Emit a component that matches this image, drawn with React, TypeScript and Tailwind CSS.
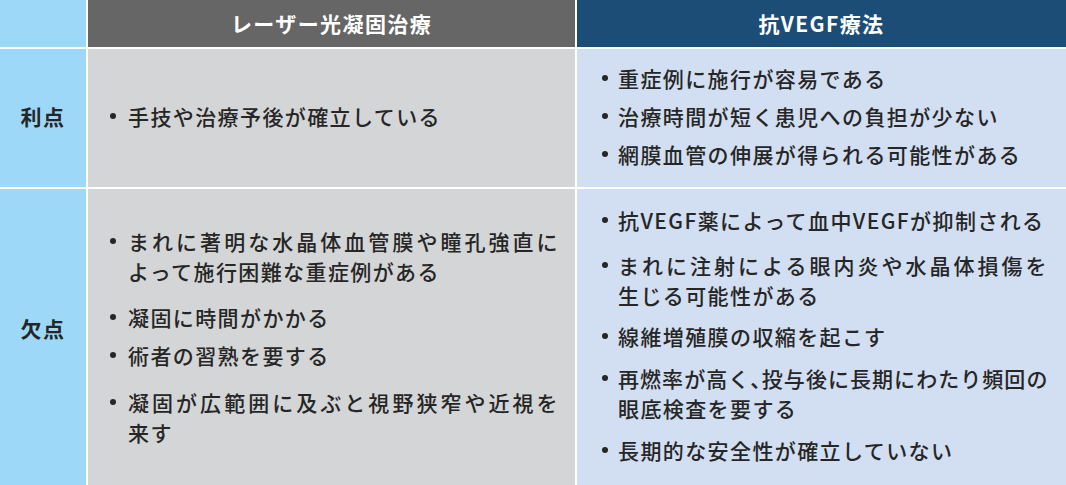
type Item = (string | string[])[];

const laserPros: Item[] = [["手技や治療予後が確立している"]];
const vegfPros: Item[] = [
  ["重症例に施行が容易である"],
  ["治療時間が短く患児への負担が少ない"],
  ["網膜血管の伸展が得られる可能性がある"],
];
const laserCons: Item[] = [
  ["まれに著明な水晶体血管膜や瞳孔強直に", "よって施行困難な重症例がある"],
  ["凝固に時間がかかる"],
  ["術者の習熟を要する"],
  ["凝固が広範囲に及ぶと視野狭窄や近視を", "来す"],
];
const vegfCons: Item[] = [
  ["抗VEGF薬によって血中VEGFが抑制される"],
  ["まれに注射による眼内炎や水晶体損傷を", "生じる可能性がある"],
  ["線維増殖膜の収縮を起こす"],
  // first line has a half-width comma, split so it can be tightened
  [["再燃率が高く", "投与後に長期にわたり頻回の"], "眼底検査を要する"],
  ["長期的な安全性が確立していない"],
];

const gapMap: Record<number, string> = {
  8: "mt-[8px]",
  11: "mt-[11px]",
  12: "mt-[12px]",
  15: "mt-[15px]",
  16: "mt-[16px]",
  17: "mt-[17px]",
};

function BulletList({
  items,
  gaps,
  side,
}: {
  items: Item[];
  gaps: number[];
  side: "laser" | "vegf";
}) {
  return (
    <ul>
      {items.map((lines, i) => (
        <li key={i} className={`flex ${i === 0 ? "" : gapMap[gaps[i - 1]]}`}>
          <span className={`flex h-[30px] shrink-0 items-center ${side === "laser" ? "w-[18px]" : "w-[16px]"}`}>
            <span className="h-[6px] w-[6px] rounded-full bg-[#262626]" />
          </span>
          <div className={side === "laser" ? "w-[431px]" : "w-[430px]"}>
            {lines.map((line, j) => (
              <div
                key={j}
                className={`whitespace-nowrap leading-[30px] ${
                  j < lines.length - 1 ? "text-justify [text-align-last:justify]" : ""
                } ${Array.isArray(line) ? "tracking-[0.6px]" : ""}`}
              >
                {Array.isArray(line) ? (
                  <>
                    {line[0]}
                    <span className="[font-feature-settings:'halt']">、</span>
                    {line[1]}
                  </>
                ) : (
                  line
                )}
              </div>
            ))}
          </div>
        </li>
      ))}
    </ul>
  );
}

export default function App() {
  return (
    <div className="h-[485px] w-[1066px] overflow-hidden bg-white font-['Noto_Sans_CJK_JP','Noto_Sans',sans-serif] text-[21px] font-medium tracking-[1.4px] text-[#262626]">
      <div className="grid grid-cols-[86px_487px_489px] grid-rows-[47px_138px_296px] gap-[2px]">
        <div className="bg-[#9dd8f8]" />
        <div className="flex items-center justify-center bg-[#666666] font-bold text-white">
          レーザー光凝固治療
        </div>
        <div className="flex items-center justify-center bg-[#1b4d77] font-bold text-white">
          抗VEGF療法
        </div>

        <div className="flex items-center justify-center bg-[#9dd8f8] pb-[3px] font-bold">利点</div>
        <div className="flex flex-col justify-center bg-[#d4d5d7] pb-[4px] pl-[22px]">
          <BulletList items={laserPros} gaps={[]} side="laser" />
        </div>
        <div className="flex flex-col justify-center bg-[#d2def1] pb-[4px] pl-[25px]">
          <BulletList items={vegfPros} gaps={[8, 8]} side="vegf" />
        </div>

        <div className="flex items-center justify-center bg-[#9dd8f8] pb-[16px] font-bold">欠点</div>
        <div className="flex flex-col justify-center bg-[#d4d5d7] pb-[2px] pl-[22px]">
          <BulletList items={laserCons} gaps={[16, 8, 17]} side="laser" />
        </div>
        <div className="flex flex-col justify-center bg-[#d2def1] pb-[5px] pl-[25px]">
          <BulletList items={vegfCons} gaps={[15, 11, 12, 12]} side="vegf" />
        </div>
      </div>
    </div>
  );
}
